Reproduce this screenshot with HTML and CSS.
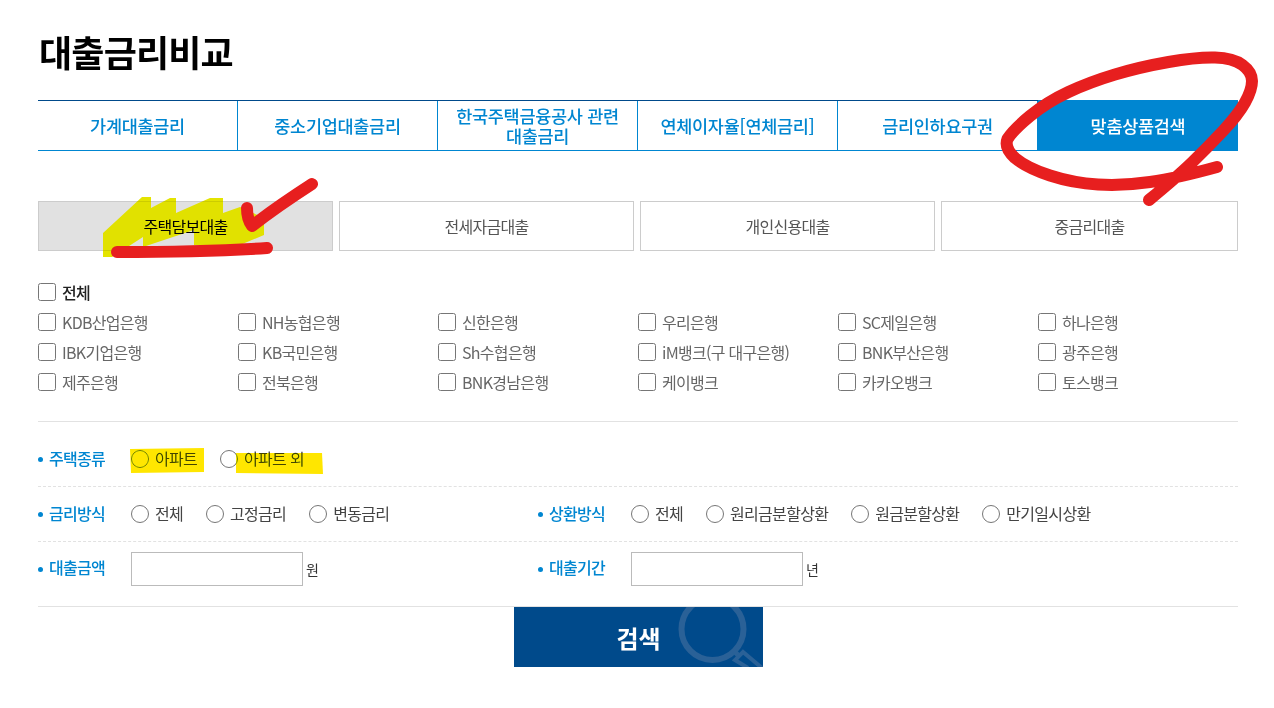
FILE: index.html
```html
<!DOCTYPE html>
<html lang="ko">
<head>
<meta charset="utf-8">
<title>대출금리비교</title>
<link rel="stylesheet" href="styles.css">
</head>
<body>
<main class="page">
  <h1 class="title">대출금리비교</h1>
  <nav class="tabs">
    <a class="tab">가계대출금리</a>
    <a class="tab">중소기업대출금리</a>
    <a class="tab">한국주택금융공사 관련<br>대출금리</a>
    <a class="tab">연체이자율[연체금리]</a>
    <a class="tab">금리인하요구권</a>
    <a class="tab tab-on">맞춤상품검색</a>
  </nav>
  <div class="subtabs">
    <a class="subtab subtab-on">주택담보대출</a>
    <a class="subtab">전세자금대출</a>
    <a class="subtab">개인신용대출</a>
    <a class="subtab">중금리대출</a>
  </div>
  <section class="banks">
    <label class="check check-all"><input type="checkbox">전체</label>
    <div class="bank-grid">
      <label class="check"><input type="checkbox">KDB산업은행</label>
      <label class="check"><input type="checkbox">NH농협은행</label>
      <label class="check"><input type="checkbox">신한은행</label>
      <label class="check"><input type="checkbox">우리은행</label>
      <label class="check"><input type="checkbox">SC제일은행</label>
      <label class="check"><input type="checkbox">하나은행</label>
      <label class="check"><input type="checkbox">IBK기업은행</label>
      <label class="check"><input type="checkbox">KB국민은행</label>
      <label class="check"><input type="checkbox">Sh수협은행</label>
      <label class="check"><input type="checkbox">iM뱅크(구 대구은행)</label>
      <label class="check"><input type="checkbox">BNK부산은행</label>
      <label class="check"><input type="checkbox">광주은행</label>
      <label class="check"><input type="checkbox">제주은행</label>
      <label class="check"><input type="checkbox">전북은행</label>
      <label class="check"><input type="checkbox">BNK경남은행</label>
      <label class="check"><input type="checkbox">케이뱅크</label>
      <label class="check"><input type="checkbox">카카오뱅크</label>
      <label class="check"><input type="checkbox">토스뱅크</label>
    </div>
  </section>
  <section class="filters">
    <div class="row row-house">
      <div class="field">
        <span class="field-label">주택종류</span>
        <div class="options">
          <label class="radio"><input type="radio" name="house">아파트</label>
          <label class="radio"><input type="radio" name="house">아파트 외</label>
        </div>
      </div>
    </div>
    <div class="row row-rate">
      <div class="field">
        <span class="field-label">금리방식</span>
        <div class="options">
          <label class="radio"><input type="radio" name="rate">전체</label>
          <label class="radio"><input type="radio" name="rate">고정금리</label>
          <label class="radio"><input type="radio" name="rate">변동금리</label>
        </div>
      </div>
      <div class="field">
        <span class="field-label">상환방식</span>
        <div class="options">
          <label class="radio"><input type="radio" name="repay">전체</label>
          <label class="radio"><input type="radio" name="repay">원리금분할상환</label>
          <label class="radio"><input type="radio" name="repay">원금분할상환</label>
          <label class="radio"><input type="radio" name="repay">만기일시상환</label>
        </div>
      </div>
    </div>
    <div class="row row-amount">
      <div class="field">
        <span class="field-label">대출금액</span>
        <input class="num" type="text"><span class="unit">원</span>
      </div>
      <div class="field">
        <span class="field-label">대출기간</span>
        <input class="num" type="text"><span class="unit">년</span>
      </div>
    </div>
  </section>
  <div class="actions">
    <button class="search" type="button">
      <svg class="search-icon" viewBox="0 0 249 60" aria-hidden="true">
        <circle cx="198.5" cy="22" r="31" fill="none" stroke="#2a6197" stroke-width="6"/>
        <path d="M220 44 L225 49" fill="none" stroke="#2a6197" stroke-width="5"/>
        <path d="M234 61 L221 53 L229 45 L248 61" fill="none" stroke="#2a6197" stroke-width="4"/>
      </svg>
      <span class="search-text">검색</span>
    </button>
  </div>
</main>
<svg class="marks marks-yellow" viewBox="0 0 1274 708" aria-hidden="true">
  <path fill="#e4e400" d="M103 257 L103 233 L142 197 L151 197 L151 208 L170 198 L176 198 L176 213 L210 198 L223 198 L223 213 L240 207 L264 218 L264 235 L240 245 L194 245 L194 230 L143 247 L143 237 L112 257 Z"/>
  <path fill="#ffe600" d="M130 449 L204 448 L204 472 L131 473 Z"/>
  <path fill="#ffe600" d="M236 453 L322 453 L323 474 L236 473 Z"/>
</svg>
<svg class="marks marks-red" viewBox="0 0 1274 708" aria-hidden="true">
  <g fill="none" stroke="#e71f1f" stroke-linecap="round" stroke-linejoin="round" stroke-width="12">
    <path d="M1217 167 Q1177 178 1150 182 Q1123 186 1098 184.5 Q1073 183 1050 175.5 Q1027 168 1015 158 Q1004 148 1007.5 139 Q1013 130 1030 116 Q1047 102 1068.5 92 Q1090 82 1115 74.5 Q1140 67 1168.5 62 Q1197 57 1215 57.5 Q1233 58 1242.5 65 Q1252 72 1252 81 Q1252 90 1245 102.5 Q1238 115 1222.5 131.5 Q1207 148 1192 162.5 Q1177 177 1149 200"/>
    <path d="M247 208 C247 216 249 222 252 226 C270 212 295 195 312 184"/>
    <path d="M117 252 C165 252 220 251 267 248"/>
  </g>
</svg>
</body>
</html>
```

FILE: styles.css
```css
* { box-sizing: border-box; }
html, body { margin: 0; padding: 0; background: #fff; }
body {
  font-family: "Noto Sans CJK KR", "Noto Sans", sans-serif;
  font-size: 16px;
  letter-spacing: -0.7px;
  color: #444;
}
.page { width: 1200px; margin-left: 38px; }
.title {
  margin: 0;
  height: 100px;
  padding: 25px 0 0 1px;
  font-size: 36px;
  line-height: 52px;
  font-weight: 700;
  letter-spacing: -0.8px;
  color: #000;
}
.tabs {
  display: grid;
  grid-template-columns: repeat(6, 200px);
  height: 51px;
  border-top: 1px solid #004a8b;
  border-bottom: 1px solid #0086d1;
}
.tab {
  display: flex;
  align-items: center;
  justify-content: center;
  text-align: center;
  font-size: 17.5px;
  line-height: 20px;
  font-weight: 500;
  letter-spacing: -0.3px;
  color: #0086d1;
  border-right: 1px solid #0086d1;
}
.tab-on { background: #0086d1; color: #fff; border-right: 0; margin-bottom: -1px; margin-top: -1px; }
.subtabs {
  display: grid;
  grid-template-columns: 295px 295px 295px 297px;
  column-gap: 6px;
  margin-top: 50px;
}
.subtab {
  display: flex;
  align-items: center;
  justify-content: center;
  height: 50px;
  border: 1px solid #ccc;
  color: #555;
}
.subtab-on { background: #e1e1e1; color: #000; }
.banks { margin-top: 26px; height: 145px; border-bottom: 1px solid #e2e2e2; }
.check {
  display: flex;
  align-items: center;
  height: 30px;
  color: #666;
  white-space: nowrap;
}
.check input { width: 18px; height: 18px; margin: 0 6px 0 0; }
.check-all { color: #222; font-weight: 500; }
.bank-grid { display: grid; grid-template-columns: repeat(6, 200px); }
.filters { height: 185px; border-bottom: 1px solid #e2e2e2; }
.row { display: flex; }
.row-house { height: 65px; padding-top: 10px; border-bottom: 1px dashed #e2e2e2; }
.row-rate { height: 55px; border-bottom: 1px dashed #e2e2e2; }
.row-amount { height: 64px; padding-top: 10px; align-items: flex-start; }
.field { display: flex; align-items: center; width: 500px; height: 100%; }
.row-amount .field { height: 34px; }
.field-label {
  position: relative;
  width: 93px;
  padding: 0 0 2px 11px;
  flex: none;
  font-weight: 500;
  color: #0086d1;
}
.row-amount .field-label { padding-bottom: 4px; }
.field-label::before {
  content: "";
  position: absolute;
  left: 0;
  top: 50%;
  width: 5px;
  height: 5px;
  margin-top: -2px;
  border-radius: 50%;
  background: #0086d1;
}
.options { display: flex; column-gap: 23px; }
.radio { display: flex; align-items: center; padding-bottom: 2px; white-space: nowrap; color: #444; }
.radio input { width: 18px; height: 18px; margin: 2px 6px 0 0; }
.num {
  width: 172px;
  height: 34px;
  margin: 0;
  border: 1px solid #bbb;
  background: #fff;
  padding: 0 6px;
}
.unit { margin-left: 3px; font-size: 14px; color: #333; padding-bottom: 1px; }
.actions { display: flex; justify-content: center; padding-left: 1px; }
.search {
  position: relative;
  display: flex;
  align-items: center;
  justify-content: center;
  width: 249px;
  height: 60px;
  padding: 0;
  border: 0;
  overflow: hidden;
  background: #004a8b;
  font-family: inherit;
}
.search-icon { position: absolute; left: 0; top: 0; width: 249px; height: 60px; }
.search-text {
  position: relative;
  font-size: 24px;
  font-weight: 700;
  letter-spacing: 0;
  color: #fff;
}
.marks { position: absolute; left: 0; top: 0; width: 1274px; height: 708px; pointer-events: none; }
.marks-yellow { mix-blend-mode: darken; }
```
